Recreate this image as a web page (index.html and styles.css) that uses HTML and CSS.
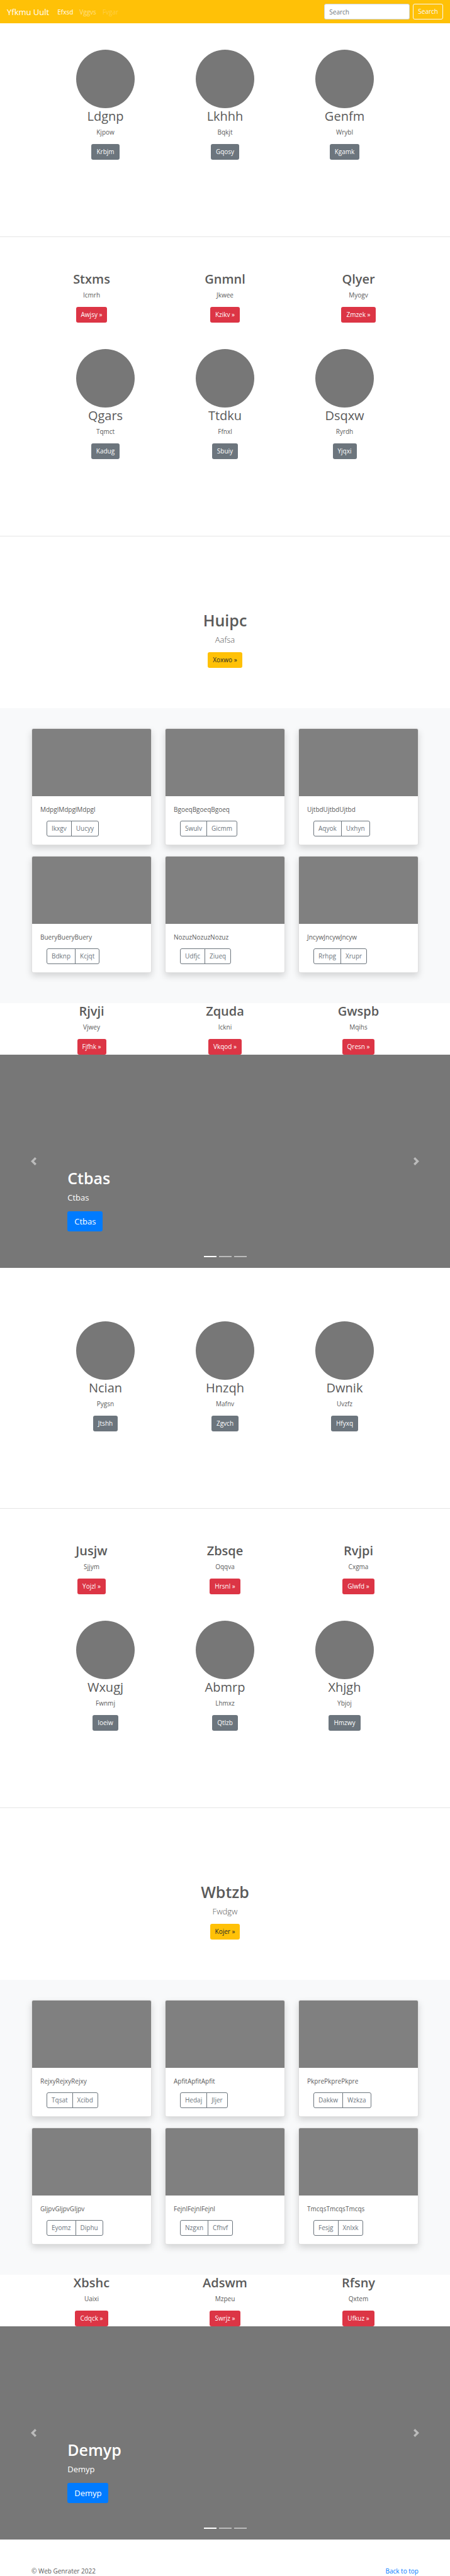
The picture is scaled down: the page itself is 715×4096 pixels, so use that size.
FILE: index.html
```html
<!DOCTYPE html>
<html lang="en">
<head>
<meta charset="utf-8">
<meta name="viewport" content="width=device-width, initial-scale=1">
<title>Yfkmu Uult</title>
<link rel="stylesheet" href="styles.css">
</head>
<body>
<header class="navbar" id="top">
  <a class="brand" href="#">Yfkmu Uult</a>
  <nav class="nav-links">
    <a class="nav-link active" href="#">Efxsd</a>
    <a class="nav-link" href="#">Vggvs</a>
    <a class="nav-link disabled" href="#" aria-disabled="true">Fvgar</a>
  </nav>
  <form class="search" role="search">
    <input class="search-input" type="search" placeholder="Search" aria-label="Search">
    <button class="btn btn-outline-light" type="submit">Search</button>
  </form>
</header>
<main>
  <section class="people people-first">
    <div class="person"><div class="avatar"></div><h2>Ldgnp</h2><p>Kjpow</p><a class="btn btn-secondary" href="#">Krbjm</a></div>
    <div class="person"><div class="avatar"></div><h2>Lkhhh</h2><p>Bqkjt</p><a class="btn btn-secondary" href="#">Gqosy</a></div>
    <div class="person"><div class="avatar"></div><h2>Genfm</h2><p>Wrybl</p><a class="btn btn-secondary" href="#">Kgamk</a></div>
  </section>
  <hr class="divider">
  <section class="features features-spaced">
    <div class="feature"><h2>Stxms</h2><p>Icmrh</p><a class="btn btn-danger" href="#">Awjsy »</a></div>
    <div class="feature"><h2>Gnmnl</h2><p>Jkwee</p><a class="btn btn-danger" href="#">Kzikv »</a></div>
    <div class="feature"><h2>Qlyer</h2><p>Myogv</p><a class="btn btn-danger" href="#">Zmzek »</a></div>
  </section>
  <section class="people">
    <div class="person"><div class="avatar"></div><h2>Qgars</h2><p>Tqmct</p><a class="btn btn-secondary" href="#">Kadug</a></div>
    <div class="person"><div class="avatar"></div><h2>Ttdku</h2><p>Ffnxl</p><a class="btn btn-secondary" href="#">Sbuiy</a></div>
    <div class="person"><div class="avatar"></div><h2>Dsqxw</h2><p>Ryrdh</p><a class="btn btn-secondary" href="#">Yjqxi</a></div>
  </section>
  <hr class="divider">
  <section class="hero">
    <h1>Huipc</h1>
    <p class="lead">Aafsa</p>
    <a class="btn btn-warning" href="#">Xoxwo »</a>
  </section>
  <section class="album">
    <div class="cards">
      <article class="card"><div class="thumb"></div><div class="card-body"><p>MdpglMdpglMdpgl</p><div class="btn-group"><button class="btn btn-outline" type="button">Ikxgv</button><button class="btn btn-outline" type="button">Uucyy</button></div></div></article>
      <article class="card"><div class="thumb"></div><div class="card-body"><p>BgoeqBgoeqBgoeq</p><div class="btn-group"><button class="btn btn-outline" type="button">Swulv</button><button class="btn btn-outline" type="button">Gicmm</button></div></div></article>
      <article class="card"><div class="thumb"></div><div class="card-body"><p>UjtbdUjtbdUjtbd</p><div class="btn-group"><button class="btn btn-outline" type="button">Aqyok</button><button class="btn btn-outline" type="button">Uxhyn</button></div></div></article>
      <article class="card"><div class="thumb"></div><div class="card-body"><p>BueryBueryBuery</p><div class="btn-group"><button class="btn btn-outline" type="button">Bdknp</button><button class="btn btn-outline" type="button">Kcjqt</button></div></div></article>
      <article class="card"><div class="thumb"></div><div class="card-body"><p>NozuzNozuzNozuz</p><div class="btn-group"><button class="btn btn-outline" type="button">Udfjc</button><button class="btn btn-outline" type="button">Ziueq</button></div></div></article>
      <article class="card"><div class="thumb"></div><div class="card-body"><p>JncywJncywJncyw</p><div class="btn-group"><button class="btn btn-outline" type="button">Rrhpg</button><button class="btn btn-outline" type="button">Xrupr</button></div></div></article>
    </div>
  </section>
  <section class="features">
    <div class="feature"><h2>Rjvji</h2><p>Vjwey</p><a class="btn btn-danger" href="#">Fjfhk »</a></div>
    <div class="feature"><h2>Zquda</h2><p>Ickni</p><a class="btn btn-danger" href="#">Vkqod »</a></div>
    <div class="feature"><h2>Gwspb</h2><p>Mqihs</p><a class="btn btn-danger" href="#">Qresn »</a></div>
  </section>
  <section class="carousel" aria-label="Ctbas">
    <button class="control" type="button" aria-label="Previous"><svg class="chevron" viewBox="0 0 8 8" aria-hidden="true"><path d="M5.25 0l-4 4 4 4 1.500-1.500L4.250 4l2.500-2.500L5.250 0z"/></svg></button>
    <div class="caption"><h1>Ctbas</h1><p>Ctbas</p><a class="btn btn-primary" href="#">Ctbas</a></div>
    <button class="control" type="button" aria-label="Next"><svg class="chevron" viewBox="0 0 8 8" aria-hidden="true"><path d="M2.750 0l-1.500 1.500L3.750 4l-2.500 2.500L2.750 8l4-4-4-4z"/></svg></button>
    <div class="indicators"><span class="indicator current"></span><span class="indicator"></span><span class="indicator"></span></div>
  </section>

  <section class="people people-after">
    <div class="person"><div class="avatar"></div><h2>Ncian</h2><p>Pygsn</p><a class="btn btn-secondary" href="#">Jtshh</a></div>
    <div class="person"><div class="avatar"></div><h2>Hnzqh</h2><p>Mafnv</p><a class="btn btn-secondary" href="#">Zgvch</a></div>
    <div class="person"><div class="avatar"></div><h2>Dwnik</h2><p>Uvzfz</p><a class="btn btn-secondary" href="#">Hfyxq</a></div>
  </section>
  <hr class="divider">
  <section class="features features-spaced">
    <div class="feature"><h2>Jusjw</h2><p>Sjjym</p><a class="btn btn-danger" href="#">Yojzl »</a></div>
    <div class="feature"><h2>Zbsqe</h2><p>Oqqva</p><a class="btn btn-danger" href="#">Hrsnl »</a></div>
    <div class="feature"><h2>Rvjpi</h2><p>Cxgma</p><a class="btn btn-danger" href="#">Glwfd »</a></div>
  </section>
  <section class="people">
    <div class="person"><div class="avatar"></div><h2>Wxugj</h2><p>Fwnmj</p><a class="btn btn-secondary" href="#">Ioeiw</a></div>
    <div class="person"><div class="avatar"></div><h2>Abmrp</h2><p>Lhmxz</p><a class="btn btn-secondary" href="#">Qtlzb</a></div>
    <div class="person"><div class="avatar"></div><h2>Xhjgh</h2><p>Ybjoj</p><a class="btn btn-secondary" href="#">Hmzwy</a></div>
  </section>
  <hr class="divider">
  <section class="hero">
    <h1>Wbtzb</h1>
    <p class="lead">Fwdgw</p>
    <a class="btn btn-warning" href="#">Kojer »</a>
  </section>
  <section class="album">
    <div class="cards">
      <article class="card"><div class="thumb"></div><div class="card-body"><p>RejxyRejxyRejxy</p><div class="btn-group"><button class="btn btn-outline" type="button">Tqsat</button><button class="btn btn-outline" type="button">Xcibd</button></div></div></article>
      <article class="card"><div class="thumb"></div><div class="card-body"><p>ApfitApfitApfit</p><div class="btn-group"><button class="btn btn-outline" type="button">Hedaj</button><button class="btn btn-outline" type="button">Jljer</button></div></div></article>
      <article class="card"><div class="thumb"></div><div class="card-body"><p>PkprePkprePkpre</p><div class="btn-group"><button class="btn btn-outline" type="button">Dakkw</button><button class="btn btn-outline" type="button">Wzkza</button></div></div></article>
      <article class="card"><div class="thumb"></div><div class="card-body"><p>GljpvGljpvGljpv</p><div class="btn-group"><button class="btn btn-outline" type="button">Eyomz</button><button class="btn btn-outline" type="button">Diphu</button></div></div></article>
      <article class="card"><div class="thumb"></div><div class="card-body"><p>FejnlFejnlFejnl</p><div class="btn-group"><button class="btn btn-outline" type="button">Nzgxn</button><button class="btn btn-outline" type="button">Cfhvf</button></div></div></article>
      <article class="card"><div class="thumb"></div><div class="card-body"><p>TmcqsTmcqsTmcqs</p><div class="btn-group"><button class="btn btn-outline" type="button">Fesjg</button><button class="btn btn-outline" type="button">Xnlxk</button></div></div></article>
    </div>
  </section>
  <section class="features">
    <div class="feature"><h2>Xbshc</h2><p>Uaixi</p><a class="btn btn-danger" href="#">Cdqck »</a></div>
    <div class="feature"><h2>Adswm</h2><p>Mzpeu</p><a class="btn btn-danger" href="#">Swrjz »</a></div>
    <div class="feature"><h2>Rfsny</h2><p>Qxtem</p><a class="btn btn-danger" href="#">Ufkuz »</a></div>
  </section>
  <section class="carousel" aria-label="Demyp">
    <button class="control" type="button" aria-label="Previous"><svg class="chevron" viewBox="0 0 8 8" aria-hidden="true"><path d="M5.250 0l-4 4 4 4 1.500-1.500L4.250 4l2.500-2.500L5.250 0z"/></svg></button>
    <div class="caption"><h1>Demyp</h1><p>Demyp</p><a class="btn btn-primary" href="#">Demyp</a></div>
    <button class="control" type="button" aria-label="Next"><svg class="chevron" viewBox="0 0 8 8" aria-hidden="true"><path d="M2.750 0l-1.500 1.500L3.750 4l-2.500 2.500L2.750 8l4-4-4-4z"/></svg></button>
    <div class="indicators"><span class="indicator current"></span><span class="indicator"></span><span class="indicator"></span></div>
  </section>
</main>
<footer class="footer">
  <p>© Web Genrater 2022</p>
  <a href="#top">Back to top</a>
</footer>
</body>
</html>
```
FILE: styles.css
```css
*,
*::before,
*::after {
  box-sizing: border-box;
}

body {
  margin: 0;
  background: #fff;
  color: #5a5a5a;
  font: 400 10px/16px "Open Sans", "Noto Sans", sans-serif;
}

h1,
h2,
p {
  margin: 0;
}

h1 {
  margin-bottom: 5px;
  font-size: 25px;
  font-weight: 600;
  line-height: 32px;
}

h2 {
  margin-bottom: 5px;
  font-size: 20px;
  font-weight: 600;
  line-height: 25px;
}

a {
  color: #007bff;
  text-decoration: none;
}

/* Buttons */
.btn {
  display: inline-block;
  padding: 4px 7px;
  border: 1px solid transparent;
  border-radius: 3px;
  background: transparent;
  font: inherit;
  line-height: 15px;
  text-align: center;
  vertical-align: top;
  cursor: pointer;
}

.btn-secondary {
  background: #6c757d;
  color: #fff;
}

.btn-danger {
  background: #dc3545;
  color: #fff;
}

.btn-warning {
  background: #ffc107;
  color: #212529;
}

.btn-primary {
  padding: 5px 10px;
  background: #007bff;
  color: #fff;
  font-size: 13px;
  line-height: 20px;
}

.btn-outline {
  border-color: #6c757d;
  color: #6c757d;
}

.btn-outline-light {
  border-color: #f8f9fa;
  color: #f8f9fa;
}

/* Navigation bar */
.navbar {
  display: flex;
  align-items: center;
  padding: 6px 11px;
  background: #ffc107;
}

.brand {
  margin-right: 8px;
  color: #fff;
  font-size: 13px;
}

.nav-links {
  display: flex;
  flex: 1;
}

.nav-link {
  padding: 0 5px;
  color: rgba(255, 255, 255, 0.5);
}

.nav-link.active {
  color: #fff;
}

.nav-link.disabled {
  color: rgba(255, 255, 255, 0.25);
}

.search {
  display: flex;
  gap: 5px;
}

.search-input {
  width: 136px;
  height: 25px;
  padding: 4px 7px;
  border: 1px solid #ced4da;
  border-radius: 3px;
  background: #fff;
  color: #495057;
  font: inherit;
}

.search-input::placeholder {
  color: #6c757d;
}

/* Rows of people */
.people {
  display: grid;
  grid-template-columns: repeat(3, 1fr);
  max-width: 570px;
  margin: 0 auto;
  padding-bottom: 122px;
  text-align: center;
}

.people-first {
  padding-top: 42px;
}

.people-after {
  padding-top: 85px;
}

.person h2 {
  font-weight: 400;
}

.person p,
.feature p {
  margin-bottom: 11px;
}

.avatar {
  width: 93px;
  height: 93px;
  margin: 0 auto;
  border-radius: 50%;
  background: #777;
}

.divider {
  height: 1px;
  margin: 0;
  border: 0;
  background: #e5e5e5;
}

/* Feature columns */
.features {
  display: grid;
  grid-template-columns: repeat(3, 1fr);
  max-width: 636px;
  margin: 0 auto;
  text-align: center;
}

.features-spaced {
  padding: 54px 0 42px;
}

/* Centred introduction */
.hero {
  padding: 117px 20px 64px;
  text-align: center;
}

.lead {
  margin-bottom: 10px;
  font-size: 13px;
  font-weight: 300;
  line-height: 20px;
}

/* Album */
.album {
  padding: 32px 50px 48px;
  background: #f8f9fa;
}

.cards {
  display: grid;
  grid-template-columns: repeat(3, 1fr);
  gap: 17px 21px;
  max-width: 615px;
  margin: 0 auto;
}

.card {
  overflow: hidden;
  border: 1px solid #dfdfdf;
  border-radius: 3px;
  background: #fff;
  box-shadow: 0 5px 11px rgba(0, 0, 0, 0.15);
}

.thumb {
  height: 107px;
  background: #808080;
}

.card-body {
  padding: 13px;
}

.card-body p {
  margin-bottom: 10px;
}

.btn-group {
  display: flex;
  padding-left: 10px;
}

.btn-group .btn:first-child {
  border-radius: 3px 0 0 3px;
}

.btn-group .btn:last-child {
  margin-left: -1px;
  border-radius: 0 3px 3px 0;
}

/* Carousel */
.carousel {
  position: relative;
  display: grid;
  grid-template-columns: 15% 1fr 15%;
  min-height: 339px;
  background: #777;
  color: #fff;
}

.control {
  display: flex;
  align-items: center;
  justify-content: center;
  padding: 0;
  border: 0;
  background: transparent;
  opacity: 0.5;
  cursor: pointer;
}

.chevron {
  width: 13px;
  height: 13px;
  fill: #fff;
}

.caption {
  align-self: end;
  padding-bottom: 58px;
}

.caption p {
  margin-bottom: 12px;
  font-size: 13px;
  line-height: 20px;
}

.indicators {
  position: absolute;
  right: 0;
  bottom: 17px;
  left: 0;
  display: flex;
  justify-content: center;
  gap: 4px;
}

.indicator {
  width: 20px;
  height: 2px;
  background: #fff;
  opacity: 0.5;
}

.indicator.current {
  opacity: 1;
}

.footer {
  display: flex;
  justify-content: space-between;
  max-width: 615px;
  margin: 0 auto;
  padding-top: 42px;
}
```
